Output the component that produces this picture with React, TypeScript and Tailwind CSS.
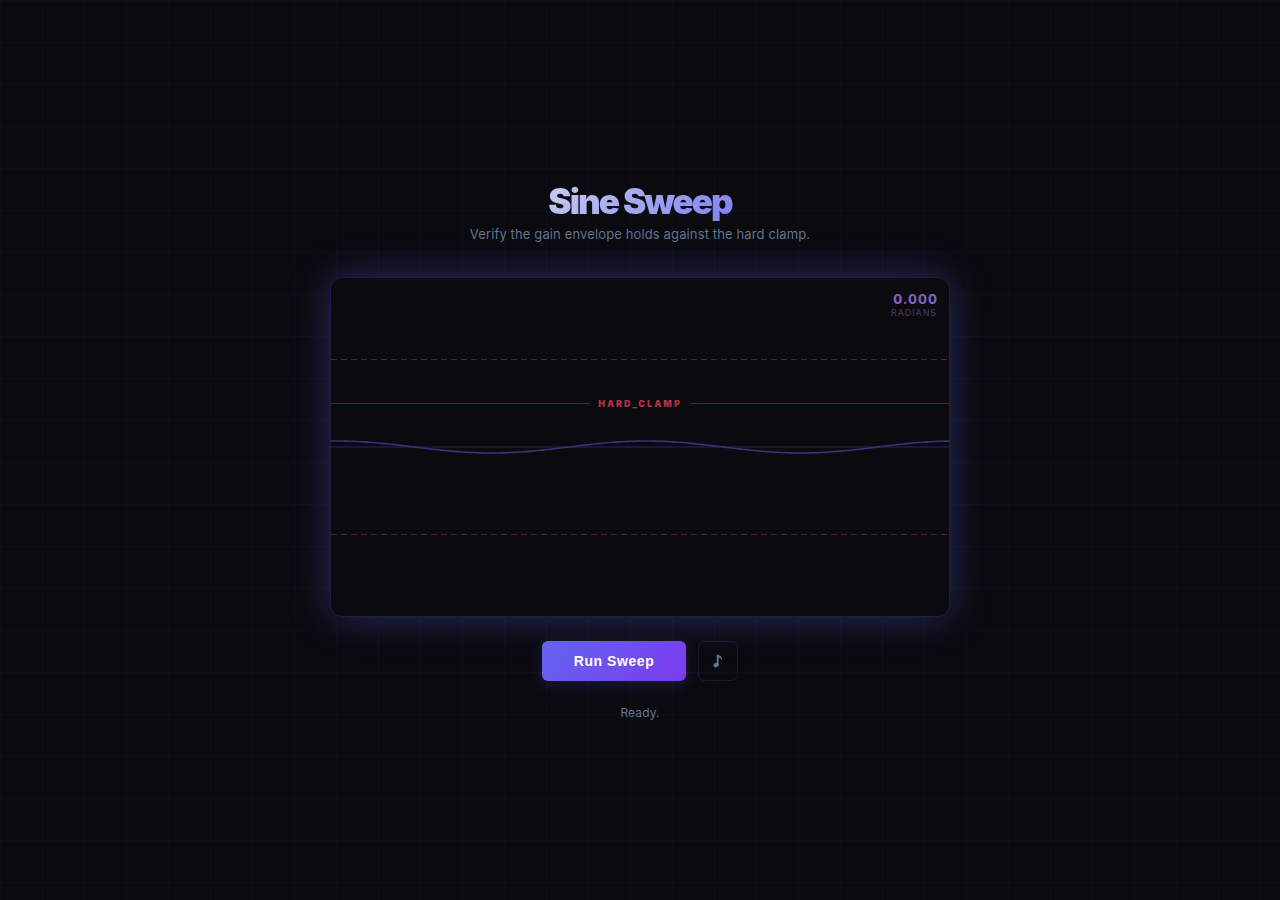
const WIDTH = 618;
const HEIGHT = 338;
const MID = 169;

function wavePath(): string {
  const points: string[] = [];
  for (let x = 0; x <= WIDTH; x += 3) {
    const y = MID - 6 * Math.cos(((x - 6) / 309) * Math.PI * 2);
    points.push(`${x} ${y.toFixed(2)}`);
  }
  return `M${points.join("L")}`;
}

function NoteIcon() {
  return (
    <svg width="10" height="14" viewBox="0 0 10 14" fill="currentColor" aria-hidden="true">
      <ellipse cx="3.1" cy="11" rx="2.6" ry="2.2" transform="rotate(-20 3.1 11)" />
      <path d="M3.7 11V.8h1.9C5.9 1.8 9.1 1.9 9.1 5.4L8.2 5.6C8 4.1 6.5 3.7 5.6 3.6V11Z" />
    </svg>
  );
}

export default function App() {
  return (
    <div className="flex min-h-screen flex-col items-center justify-center bg-[#0a0a0f] bg-[linear-gradient(rgba(99,102,241,0.04)_1px,transparent_1px),linear-gradient(90deg,rgba(99,102,241,0.04)_1px,transparent_1px)] bg-[size:42px_42px] font-['Inter',sans-serif] text-slate-500">
      <header className="text-center">
        <h1 className="bg-[linear-gradient(135deg,#e2e8f0,#6366f1)] bg-clip-text text-[35px] leading-[44px] font-black tracking-[-2px] text-transparent">
          Sine Sweep
        </h1>
        <p className="mt-[2px] text-[13px] leading-[18px] tracking-[0.01em]">
          Verify the gain envelope holds against the hard clamp.
        </p>
      </header>

      <main className="relative mt-[34px] w-full max-w-[620px] overflow-hidden rounded-xl border border-[#1e1d42] bg-[#0a0a0f] shadow-[0_0_40px_rgba(99,102,241,0.36)]">
        <svg
          className="block h-auto w-full"
          viewBox={`0 0 ${WIDTH} ${HEIGHT}`}
          fill="none"
          role="img"
          aria-label="Waveform"
        >
          <path d="M0 81.5H618M0 256.5H618" stroke="#611b2c" strokeDasharray="6 4" />
          <path d="M0 169H618" stroke="#191833" strokeWidth="2" />
          <path d={wavePath()} stroke="#34337e" strokeWidth="1.6" />
        </svg>
        <div className="absolute top-[117px] right-0 left-0 flex items-center">
          <span className="h-px flex-1 bg-[#611b2c]" />
          <span className="px-2 text-[9px] leading-[17px] font-black tracking-[2px] text-[#b52f48]">
            HARD_CLAMP
          </span>
          <span className="h-px flex-1 bg-[#611b2c]" />
        </div>
        <div className="absolute top-3 right-3 text-right">
          <div className="-mr-px text-[13px] leading-[18px] font-extrabold tracking-[1px] text-[#7c62bd]">
            0.000
          </div>
          <div className="text-[9px] leading-[10px] tracking-[0.1em] text-[#453b70]">RADIANS</div>
        </div>
      </main>

      <div className="mt-6 flex gap-3">
        <button
          type="button"
          className="h-10 w-36 rounded-md bg-[linear-gradient(135deg,#6366f1,#7c3aed)] font-['Liberation_Sans',sans-serif] text-[14px] font-bold tracking-[0.04em] text-white shadow-[0_4px_16px_rgba(99,102,241,0.2)]"
        >
          Run Sweep
        </button>
        <button
          type="button"
          aria-label="Toggle sound"
          className="flex size-10 items-center justify-center rounded-md border border-[#191832] text-slate-500"
        >
          <NoteIcon />
        </button>
      </div>
      <p className="mt-6 text-[12px] leading-4 tracking-[0.01em]" role="status">
        Ready.
      </p>
    </div>
  );
}
